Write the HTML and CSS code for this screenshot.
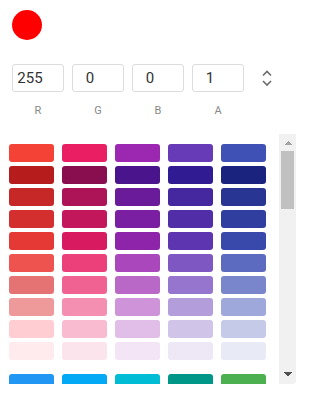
FILE: index.html
```html
<!DOCTYPE html>
<html lang="en">
<head>
  <meta charset="UTF-8">
  <meta name="viewport" content="width=device-width, initial-scale=1.0">
  <title>Color Picker</title>
  <link rel="stylesheet" href="styles.css">
</head>
<body>
  <div class="picker">
    <div class="preview" id="preview"></div>

    <div class="fields">
      <div class="field">
        <input type="text" id="r" value="255">
        <label for="r">R</label>
      </div>
      <div class="field">
        <input type="text" id="g" value="0">
        <label for="g">G</label>
      </div>
      <div class="field">
        <input type="text" id="b" value="0">
        <label for="b">B</label>
      </div>
      <div class="field">
        <input type="text" id="a" value="1">
        <label for="a">A</label>
      </div>
      <button class="toggle" title="Switch format">
        <svg width="12" height="20" viewBox="0 0 12 20" fill="none" stroke="#6b6b6b" stroke-width="1.6">
          <path d="M2 7.5 L6 3.5 L10 7.5"/>
          <path d="M2 13 L6 17 L10 13"/>
        </svg>
      </button>
    </div>

    <div class="palette">
      <div class="swatches" id="swatches"></div>
      <div class="scrollbar">
        <div class="arrow up"></div>
        <div class="track"><div class="thumb" id="thumb"></div></div>
        <div class="arrow down"></div>
      </div>
    </div>
  </div>

  <script>
    // Material palette: 500, 900, 800, 700, 600, 400, 300, 200, 100, 50
    const palette = [
      ["#F44336","#B71C1C","#C62828","#D32F2F","#E53935","#EF5350","#E57373","#EF9A9A","#FFCDD2","#FFEBEE"],
      ["#E91E63","#880E4F","#AD1457","#C2185B","#D81B60","#EC407A","#F06292","#F48FB1","#F8BBD0","#FCE4EC"],
      ["#9C27B0","#4A148C","#6A1B9A","#7B1FA2","#8E24AA","#AB47BC","#BA68C8","#CE93D8","#E1BEE7","#F3E5F5"],
      ["#673AB7","#311B92","#4527A0","#512DA8","#5E35B1","#7E57C2","#9575CD","#B39DDB","#D1C4E9","#EDE7F6"],
      ["#3F51B5","#1A237E","#283593","#303F9F","#3949AB","#5C6BC0","#7986CB","#9FA8DA","#C5CAE9","#E8EAF6"],
      ["#2196F3","#0D47A1","#1565C0","#1976D2","#1E88E5","#42A5F5","#64B5F6","#90CAF9","#BBDEFB","#E3F2FD"],
      ["#03A9F4","#01579B","#0277BD","#0288D1","#039BE5","#29B6F6","#4FC3F7","#81D4FA","#B3E5FC","#E1F5FE"],
      ["#00BCD4","#006064","#00838F","#0097A7","#00ACC1","#26C6DA","#4DD0E1","#80DEEA","#B2EBF2","#E0F7FA"],
      ["#009688","#004D40","#00695C","#00796B","#00897B","#26A69A","#4DB6AC","#80CBC4","#B2DFDB","#E0F2F1"],
      ["#4CAF50","#1B5E20","#2E7D32","#388E3C","#43A047","#66BB6A","#81C784","#A5D6A7","#C8E6C9","#E8F5E9"],
      ["#8BC34A","#33691E","#558B2F","#689F38","#7CB342","#9CCC65","#AED581","#C5E1A5","#DCEDC8","#F1F8E9"],
      ["#CDDC39","#827717","#9E9D24","#AFB42B","#C0CA33","#D4E157","#DCE775","#E6EE9C","#F0F4C3","#F9FBE7"],
      ["#FFEB3B","#F57F17","#F9A825","#FBC02D","#FDD835","#FFEE58","#FFF176","#FFF59D","#FFF9C4","#FFFDE7"],
      ["#FFC107","#FF6F00","#FF8F00","#FFA000","#FFB300","#FFCA28","#FFD54F","#FFE082","#FFECB3","#FFF8E1"],
      ["#FF9800","#E65100","#EF6C00","#F57C00","#FB8C00","#FFA726","#FFB74D","#FFCC80","#FFE0B2","#FFF3E0"],
      ["#FF5722","#BF360C","#D84315","#E64A19","#F4511E","#FF7043","#FF8A65","#FFAB91","#FFCCBC","#FBE9E7"],
      ["#795548","#3E2723","#4E342E","#5D4037","#6D4C41","#8D6E63","#A1887F","#BCAAA4","#D7CCC8","#EFEBE9"],
      ["#9E9E9E","#212121","#424242","#616161","#757575","#BDBDBD","#E0E0E0","#EEEEEE","#F5F5F5","#FAFAFA"],
      ["#607D8B","#263238","#37474F","#455A64","#546E7A","#78909C","#90A4AE","#B0BEC5","#CFD8DC","#ECEFF1"]
    ];

    const swatches = document.getElementById("swatches");

    // Five hues per block, each hue a column of shades
    for (let i = 0; i < palette.length; i += 5) {
      const group = document.createElement("div");
      group.className = "group";
      palette.slice(i, i + 5).forEach(shades => {
        const col = document.createElement("div");
        col.className = "shades";
        shades.forEach(hex => {
          const s = document.createElement("div");
          s.className = "swatch";
          s.style.background = hex;
          s.title = hex;
          col.appendChild(s);
        });
        group.appendChild(col);
      });
      swatches.appendChild(group);
    }

    // Thumb length follows visible / total height
    const thumb = document.getElementById("thumb");
    const track = thumb.parentElement;
    const ratio = swatches.clientHeight / swatches.scrollHeight;
    thumb.style.height = Math.round(track.clientHeight * ratio) + "px";
  </script>
</body>
</html>
```

FILE: styles.css
```css
body {
  margin: 0;
  background: #fff;
  font-family: Roboto, "Liberation Sans", Arial, sans-serif;
}
.picker {
  width: 296px;
  padding-top: 10px;
}
.preview {
  width: 30px;
  height: 30px;
  border-radius: 50%;
  background: #f00;
  margin-left: 12px;
}
.fields {
  display: flex;
  align-items: flex-start;
  gap: 8px;
  margin-top: 24px;
  padding-left: 12px;
}
.field {
  display: flex;
  flex-direction: column;
  align-items: center;
  width: 52px;
}
.field input {
  box-sizing: border-box;
  width: 52px;
  height: 28px;
  padding: 0 16px 0 0;
  border: 1px solid #dcdcdc;
  border-radius: 3px;
  font-family: inherit;
  font-size: 15px;
  color: #333;
  text-align: center;
  outline: none;
}
.field label {
  margin-top: 12px;
  font-size: 11px;
  line-height: 14px;
  color: #888;
}
.toggle {
  border: none;
  background: none;
  padding: 0;
  margin: 4px 0 0 9px;
  width: 12px;
  height: 20px;
  cursor: pointer;
}
.palette {
  display: flex;
  height: 250px;
  margin-top: 16px;
  border-radius: 0 0 4px 0;
  overflow: hidden;
}
.swatches {
  flex: 1;
  box-sizing: border-box;
  padding: 10px 0 0 9px;
  overflow-y: scroll;
  scrollbar-width: none;
}
.scrollbar {
  display: flex;
  flex-direction: column;
  width: 17px;
  background: #f1f1f1;
}
.arrow {
  height: 17px;
  background-repeat: no-repeat;
  background-size: 8px 4px;
  background-position: center;
}
.arrow.up {
  background-image: conic-gradient(from 135deg at 50% 0, #a3a3a3 90deg, transparent 0);
}
.arrow.down {
  background-image: conic-gradient(from -45deg at 50% 100%, #505050 90deg, transparent 0);
  background-position: center 5px;
}
.track {
  flex: 1;
  padding: 0 2px;
}
.thumb {
  height: 58px;
  background: #c1c1c1;
}
.group {
  display: grid;
  grid-template-columns: repeat(5, 45px);
  gap: 8px;
  margin-bottom: 14px;
}
.shades {
  display: flex;
  flex-direction: column;
  gap: 4px;
}
.swatch {
  height: 18px;
  border-radius: 3px;
  cursor: pointer;
}
```
